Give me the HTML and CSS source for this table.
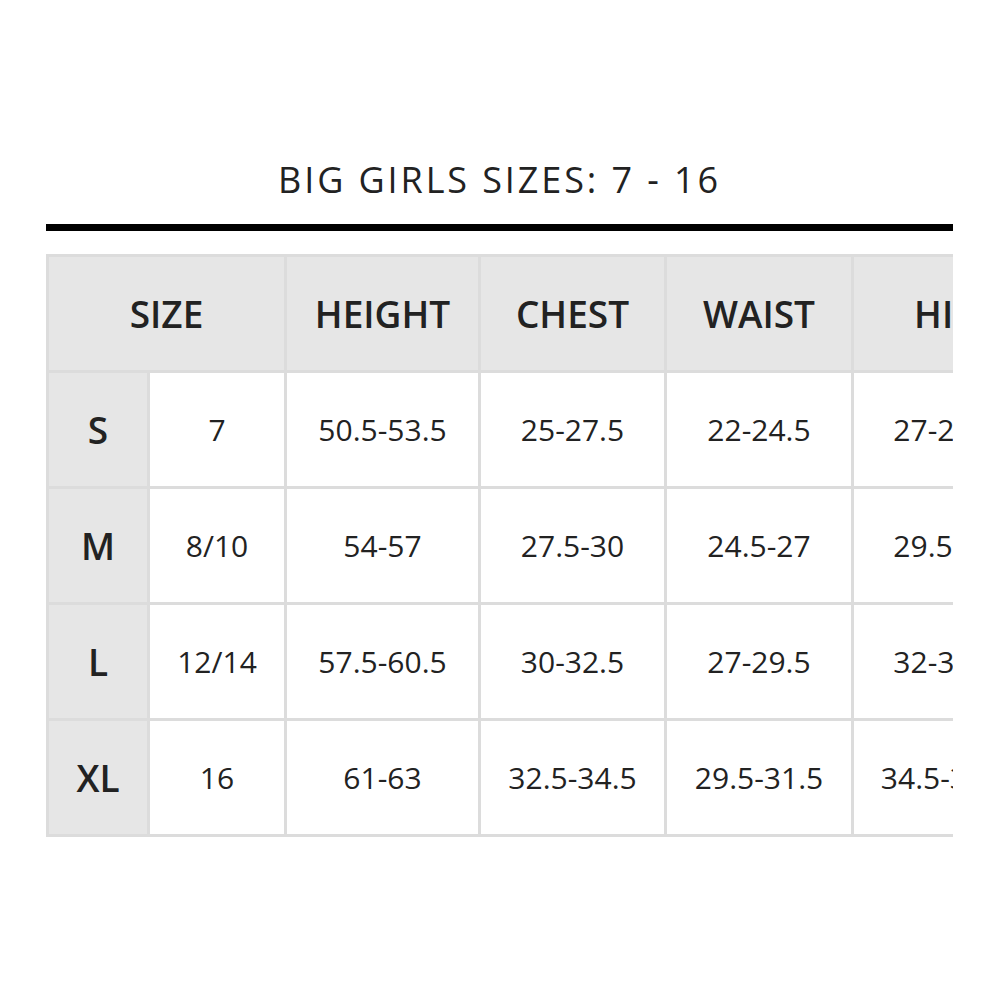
FILE: index.html
```html
<!DOCTYPE html>
<html>
<head>
<meta charset="utf-8">
<link rel="stylesheet" href="styles.css">
</head>
<body>
<div class="page">
  <h1 class="title">BIG GIRLS SIZES: 7 - 16</h1>
  <div class="rule"></div>
  <div class="table-wrap">
    <table class="chart">
      <colgroup>
        <col class="c1"><col class="c2"><col class="c3"><col class="c4"><col class="c5"><col class="c6">
      </colgroup>
      <thead>
        <tr>
          <th colspan="2">SIZE</th>
          <th>HEIGHT</th>
          <th>CHEST</th>
          <th>WAIST</th>
          <th>HIP</th>
        </tr>
      </thead>
      <tbody>
        <tr><th class="label">S</th><td>7</td><td>50.5-53.5</td><td>25-27.5</td><td>22-24.5</td><td>27-29.5</td></tr>
        <tr><th class="label">M</th><td>8/10</td><td>54-57</td><td>27.5-30</td><td>24.5-27</td><td>29.5-32</td></tr>
        <tr><th class="label">L</th><td>12/14</td><td>57.5-60.5</td><td>30-32.5</td><td>27-29.5</td><td>32-34.5</td></tr>
        <tr><th class="label">XL</th><td>16</td><td>61-63</td><td>32.5-34.5</td><td>29.5-31.5</td><td>34.5-37.5</td></tr>
      </tbody>
    </table>
  </div>
</div>
</body>
</html>
```
FILE: styles.css
```css
html, body {
  margin: 0;
  padding: 0;
  background: #ffffff;
}
body {
  font-family: "Open Sans", "Liberation Sans", sans-serif;
  color: #222222;
}
.page {
  padding: 156px 47px 0 46px;
}
.title {
  margin: 0;
  font-size: 36px;
  line-height: 48px;
  font-weight: 400;
  letter-spacing: 2.9px;
  text-align: center;
  color: #222222;
}
.rule {
  height: 7px;
  background: #000000;
  margin-top: 20px;
}
.table-wrap {
  margin-top: 23px;
  width: 907px;
  overflow: hidden;
}
.chart {
  table-layout: fixed;
  width: 993px;
  border-collapse: separate;
  border-spacing: 0;
  border-top: 3px solid #dcdcdc;
  border-left: 3px solid #dcdcdc;
}
.c1 { width: 101px; }
.c2 { width: 137px; }
.c3 { width: 194px; }
.c4 { width: 186px; }
.c5 { width: 187px; }
.c6 { width: 185px; }
.chart th,
.chart td {
  height: 116px;
  box-sizing: border-box;
  padding: 0;
  border-right: 3px solid #dcdcdc;
  border-bottom: 3px solid #dcdcdc;
  text-align: center;
  vertical-align: middle;
  white-space: nowrap;
}
.chart thead th {
  background: #e6e6e6;
  font-size: 37px;
  font-weight: 600;
}
.chart td {
  font-size: 30px;
  font-weight: 400;
  background: #ffffff;
}
.chart th.label {
  background: #e6e6e6;
  font-size: 37px;
  font-weight: 600;
}
```
